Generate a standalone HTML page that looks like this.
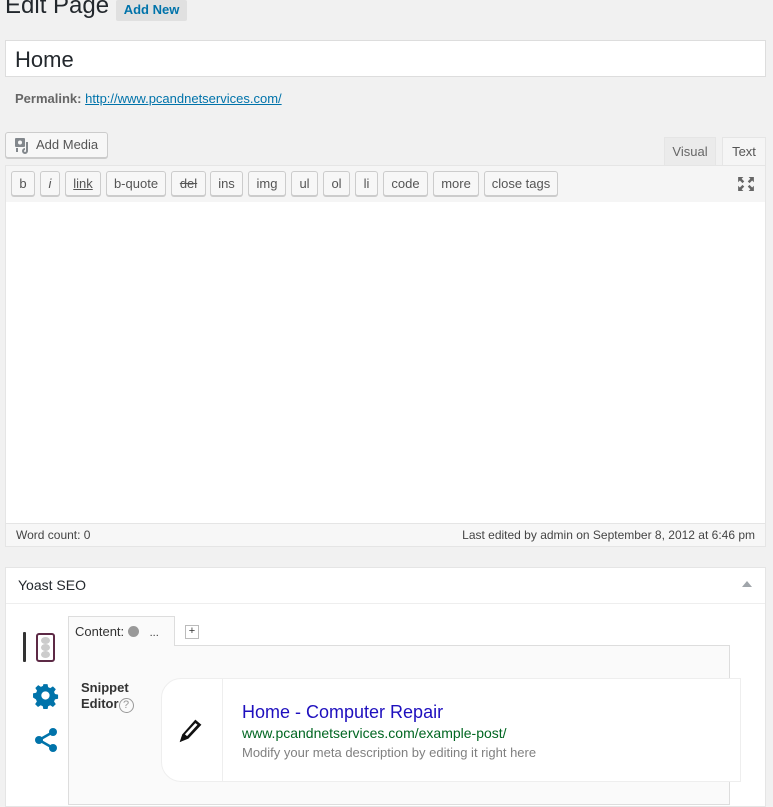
<!DOCTYPE html>
<html><head><meta charset="utf-8"><style>
*{box-sizing:border-box;margin:0;padding:0}
body{width:773px;height:801px;overflow:hidden;background:#f1f1f1;font-family:"Liberation Sans",sans-serif;color:#444;position:relative;font-size:13px}
.a{position:absolute}
.btn{position:absolute;top:171px;height:25px;border:1px solid #ccc;border-radius:3px;background:#f7f7f7;box-shadow:0 1px 0 #ccc;font-size:13px;color:#555;text-align:center;line-height:23px}
</style></head><body>
<div class="a" style="left:5px;top:-8px;font-size:24px;color:#23282d">Edit Page</div>
<div class="a" style="left:116px;top:0;width:71px;height:21px;background:#e0e0e0;border-radius:2px;color:#0073aa;font-size:13px;font-weight:bold;line-height:19px;text-align:center">Add New</div>
<div class="a" style="left:5px;top:40px;width:761px;height:37px;background:#fff;border:1px solid #ddd;font-size:22px;color:#23282d;padding-left:9px;line-height:37px">Home</div>
<div class="a" style="left:15px;top:91px;font-size:13px;color:#666"><b>Permalink:</b> <span style="color:#0073aa;text-decoration:underline">http://www.pcandnetservices.com/</span></div>
<div class="a" style="left:5px;top:132px;width:103px;height:26px;border:1px solid #ccc;border-radius:3px;background:#f7f7f7;box-shadow:0 1px 0 #ccc;font-size:13px;color:#555;line-height:24px;padding-left:30px">Add Media
<svg class="a" style="left:8px;top:4px" width="18" height="17" viewBox="0 0 18 17"><rect x="1" y="1" width="10" height="9" rx="1" fill="#82878c"/><circle cx="6" cy="5.5" r="2" fill="#f7f7f7"/><path d="M13 5v9a2 2 0 1 1-2-2" stroke="#82878c" stroke-width="2" fill="none"/><path d="M3 11v4" stroke="#82878c" stroke-width="2"/></svg></div>
<div class="a" style="left:664px;top:137px;width:52px;height:28px;background:#ebebeb;border:1px solid #e5e5e5;border-bottom:0;color:#666;line-height:28px;text-align:center">Visual</div>
<div class="a" style="left:722px;top:137px;width:44px;height:29px;background:#f5f5f5;border:1px solid #e5e5e5;border-bottom:0;color:#555;line-height:28px;text-align:center">Text</div>
<div class="a" style="left:5px;top:165px;width:761px;height:38px;background:#f5f5f5;border:1px solid #e5e5e5"></div>
<div class="btn" style="left:11px;width:24px">b</div>
<div class="btn" style="left:40px;width:20px;font-style:italic">i</div>
<div class="btn" style="left:65px;width:36px;text-decoration:underline">link</div>
<div class="btn" style="left:106px;width:60px">b-quote</div>
<div class="btn" style="left:171px;width:35px;text-decoration:line-through">del</div>
<div class="btn" style="left:210px;width:33px">ins</div>
<div class="btn" style="left:248px;width:38px">img</div>
<div class="btn" style="left:291px;width:27px">ul</div>
<div class="btn" style="left:323px;width:27px">ol</div>
<div class="btn" style="left:355px;width:23px">li</div>
<div class="btn" style="left:383px;width:45px">code</div>
<div class="btn" style="left:433px;width:46px">more</div>
<div class="btn" style="left:484px;width:74px">close tags</div>
<svg class="a" style="left:738px;top:177px" width="16" height="14" viewBox="0 0 18 16" fill="#666"><path d="M0 0h6L4 2l3 3-2 2-3-3-2 2zM18 0v6l-2-2-3 3-2-2 3-3-2-2zM0 16v-6l2 2 3-3 2 2-3 3 2 2zM18 16h-6l2-2-3-3 2-2 3 3 2-2z"/></svg>
<div class="a" style="left:5px;top:202px;width:761px;height:322px;background:#fff;border:1px solid #e5e5e5;border-top:0"></div>
<div class="a" style="left:5px;top:523px;width:761px;height:24px;background:#f7f7f7;border:1px solid #e5e5e5;font-size:12px;color:#444;line-height:22px;padding:0 10px"><span>Word count: 0</span><span style="float:right">Last edited by admin on September 8, 2012 at 6:46 pm</span></div>
<div class="a" style="left:5px;top:567px;width:761px;height:240px;background:#fff;border:1px solid #e5e5e5"></div>
<div class="a" style="left:6px;top:603px;width:759px;height:1px;background:#eee"></div>
<div class="a" style="left:18px;top:577px;font-size:14px;color:#23282d">Yoast SEO</div>
<div class="a" style="left:742px;top:581px;width:0;height:0;border-left:5px solid transparent;border-right:5px solid transparent;border-bottom:6px solid #a0a5aa"></div>
<div class="a" style="left:23px;top:632px;width:3px;height:30px;background:#333;border-radius:1px"></div>
<div class="a" style="left:36px;top:633px;width:19px;height:29px;border:2px solid #5d2a46;border-radius:3px"></div>
<div class="a" style="left:41px;top:637px;width:9px;height:7px;border-radius:50%;background:#ccc;box-shadow:0 7px 0 #ccc,0 14px 0 #ccc"></div>
<svg class="a" style="left:32px;top:682px" width="27" height="27" viewBox="0 0 24 24"><path fill="#0073aa" d="M10 1h4l.6 3 2 .9 2.6-1.7 2.8 2.8-1.7 2.6.9 2 3 .6v4l-3 .6-.9 2 1.7 2.6-2.8 2.8-2.6-1.7-2 .9-.6 3h-4l-.6-3-2-.9-2.6 1.7-2.8-2.8 1.7-2.6-.9-2L0 14v-4l3-.6.9-2-1.7-2.6L5 2l2.6 1.7 2-.9zM12 8a4 4 0 1 0 0 8 4 4 0 0 0 0-8z" transform="scale(.92) translate(1 1)"/></svg>
<svg class="a" style="left:33px;top:727px" width="26" height="26" viewBox="0 0 26 26" fill="#0073aa"><circle cx="20" cy="5" r="4"/><circle cx="20" cy="21" r="4"/><circle cx="6" cy="13" r="4"/><path d="M6 13L20 5M6 13l14 8" stroke="#0073aa" stroke-width="2.5"/></svg>
<div class="a" style="left:68px;top:645px;width:662px;height:160px;background:#fafafa;border:1px solid #ddd"></div>
<div class="a" style="left:68px;top:616px;width:107px;height:30px;background:#fafafa;border:1px solid #ddd;border-bottom:0;font-size:13px;color:#333;padding:7px 0 0 6px">Content: <span style="display:inline-block;width:11px;height:11px;border-radius:50%;background:#999;vertical-align:-1px"></span> &nbsp; <span style="font-size:11px">...</span></div>
<div class="a" style="left:185px;top:625px;width:14px;height:14px;border:1px solid #bbb;background:#fff;font-size:11px;line-height:11px;text-align:center;color:#333">+</div>
<div class="a" style="left:81px;top:680px;font-size:13px;color:#333;font-weight:bold;line-height:16px">Snippet<br>Editor<span style="display:inline-block;width:15px;height:15px;border:1px solid #999;border-radius:50%;font-size:11px;color:#999;text-align:center;line-height:13px;font-weight:normal">?</span></div>
<div class="a" style="left:161px;top:678px;width:580px;height:104px;background:#fff;border:1px solid #eee;border-radius:20px 0 0 20px"></div>
<div class="a" style="left:222px;top:679px;width:1px;height:102px;background:#eee"></div>
<svg class="a" style="left:178px;top:716px" width="26" height="28" viewBox="0 0 30 32"><path d="M2 30l3-9L20 4l7 6L12 26z" fill="#111"/><path d="M8 21L20 8l2.5 2L10.5 23z" fill="#fff"/><path d="M2 30l3-9 4 5z" fill="#111"/></svg>
<div class="a" style="left:242px;top:702px;font-size:18px;color:#1e0fbe">Home - Computer Repair</div>
<div class="a" style="left:242px;top:725px;font-size:14px;color:#006621">www.pcandnetservices.com/example-post/</div>
<div class="a" style="left:242px;top:745px;font-size:13px;color:#808080">Modify your meta description by editing it right here</div>
</body></html>
